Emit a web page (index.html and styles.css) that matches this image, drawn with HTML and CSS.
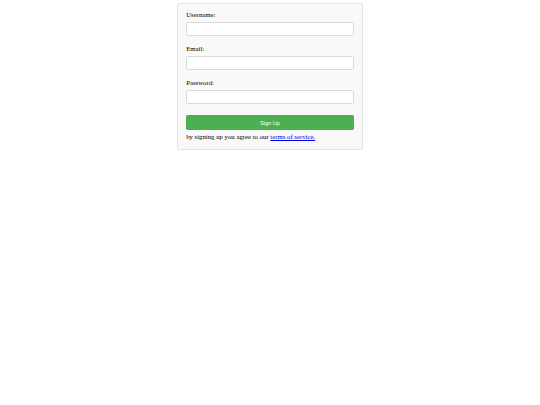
FILE: index.html
```html
<!DOCTYPE html>
<html>
<head>
<meta charset="utf-8">
<link rel="stylesheet" href="styles.css">
</head>
<body>
<form class="card">
  <div class="field">
    <label class="label" for="u">Username:</label>
    <input class="input" id="u" type="text">
  </div>
  <div class="field">
    <label class="label" for="e">Email:</label>
    <input class="input" id="e" type="email">
  </div>
  <div class="field field-last">
    <label class="label" for="p">Password:</label>
    <input class="input" id="p" type="password">
  </div>
  <button class="btn" type="button">Sign Up</button>
  <p class="note">by signing up you agree to our <a class="link" href="#">terms of service.</a></p>
</form>
</body>
</html>
```
FILE: styles.css
```css
html {
  background: #fff;
}
body {
  margin: 3.4px 0 0;
  font-family: "Liberation Serif", "Times New Roman", serif;
  font-size: 6.75px;
  color: #000;
}
.card {
  box-sizing: border-box;
  width: 186.5px;
  margin: 0 auto;
  padding: 6.8px 8.4px 7.4px;
  background: #f9f9f9;
  border: 1px solid #e3e3e3;
  border-radius: 2px;
}
.field {
  margin-bottom: 9.45px;
}
.field-last {
  margin-bottom: 11.5px;
}
.label {
  display: block;
  line-height: 7.76px;
  margin-bottom: 3.3px;
}
.input {
  display: block;
  box-sizing: border-box;
  width: 100%;
  height: 13.5px;
  margin: 0;
  padding: 0 3.4px;
  border: 1px solid #dadada;
  border-radius: 1.7px;
  background: #fff;
  font-family: "Liberation Sans", Arial, sans-serif;
  font-size: 5.6px;
}
.btn {
  display: block;
  box-sizing: border-box;
  width: 100%;
  height: 14.6px;
  margin: 0;
  padding: 0;
  border: none;
  border-radius: 1.7px;
  background: #4caf50;
  color: #fff;
  font-family: "Liberation Sans", Arial, sans-serif;
  font-size: 5.63px;
}
.note {
  margin: 3.6px 0 0;
  line-height: 7.76px;
}
.link {
  color: #0000ee;
  text-decoration: underline;
}
```
